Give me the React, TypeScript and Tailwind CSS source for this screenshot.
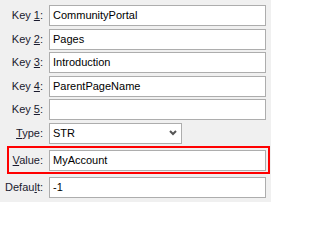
import React from "react";

function Label({ pre, u, post }: { pre: string; u: string; post: string }) {
  return (
    <span>
      {pre}
      <span className="underline underline-offset-[1px]">{u}</span>
      {post}
    </span>
  );
}

function Field({ value }: { value: string }) {
  return (
    <div className="flex-1 h-[21px] bg-white border border-[#adadad] flex items-center pl-[3px] text-black">
      {value}
    </div>
  );
}

export default function App() {
  const keys = [
    { n: "1", v: "CommunityPortal" },
    { n: "2", v: "Pages" },
    { n: "3", v: "Introduction" },
    { n: "4", v: "ParentPageName" },
    { n: "5", v: "" },
  ];
  return (
    <div
      className="w-[271px] h-[202px] bg-[#f0f0f0] pt-[5px] flex flex-col text-[11px] leading-none text-[#1a1a2e] overflow-hidden"
      style={{ fontFamily: '"Liberation Sans", Arial, sans-serif' }}
    >
      {keys.map((k) => (
        <div key={k.n} className="flex items-center h-[21px] mb-[2.5px] pr-[5px]">
          <div className="w-[44px] text-right pr-[1px]">
            <Label pre="Key " u={k.n} post=":" />
          </div>
          <div className="ml-[5px] flex-1 flex">
            <Field value={k.v} />
          </div>
        </div>
      ))}
      <div className="flex items-center h-[21px]">
        <div className="w-[44px] text-right pr-[1px]">
          <Label pre="" u="T" post="ype:" />
        </div>
        <div className="ml-[5px] w-[133px] h-[21px] bg-white border border-[#adadad] flex items-center justify-between pl-[3px] pr-[4px] text-black">
          <span>STR</span>
          <svg width="8" height="6" viewBox="0 0 8 6">
            <path d="M1 1 L4 4 L7 1" fill="none" stroke="#555" strokeWidth="2" />
          </svg>
        </div>
      </div>
      <div className="mt-[2.5px] ml-[7px] mr-[1px] h-[28px] border-2 border-[#ff0000] flex items-center pr-[2px]">
        <div className="w-[35px] text-right pr-[1px]">
          <Label pre="" u="V" post="alue:" />
        </div>
        <div className="ml-[5px] flex-1 flex">
          <Field value="MyAccount" />
        </div>
      </div>
      <div className="mt-[3px] flex items-center h-[21px] pr-[5px]">
        <div className="w-[44px] text-right pr-[1px]">
          <Label pre="Defau" u="l" post="t:" />
        </div>
        <div className="ml-[5px] flex-1 flex">
          <Field value="-1" />
        </div>
      </div>
    </div>
  );
}
